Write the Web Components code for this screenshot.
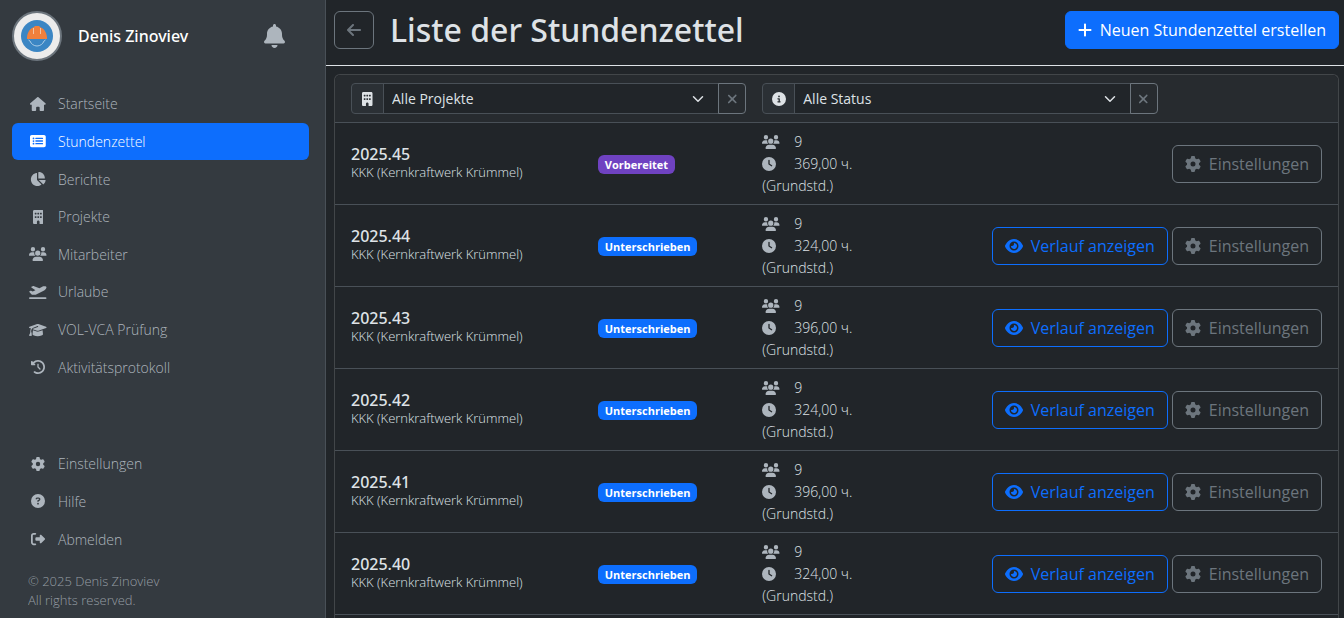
<!DOCTYPE html>
<html lang="de">
<head>
<meta charset="utf-8">
<title>Liste der Stundenzettel</title>
<style>
    body {
        margin: 0;
        min-height: 100vh;
        background: #212529;
        color: #dee2e6;
        font-family: "Open Sans", "Noto Sans", sans-serif;
        font-size: 14px;
        --heading-font: "Noto Sans", "Open Sans", sans-serif;
    }
</style>
</head>
<body>
<app-shell>
    <side-bar slot="sidebar" user="Denis Zinoviev">
        <nav-item icon="house">Startseite</nav-item>
        <nav-item icon="list" active>Stundenzettel</nav-item>
        <nav-item icon="pie">Berichte</nav-item>
        <nav-item icon="building">Projekte</nav-item>
        <nav-item icon="users">Mitarbeiter</nav-item>
        <nav-item icon="plane">Urlaube</nav-item>
        <nav-item icon="cap">VOL-VCA Prüfung</nav-item>
        <nav-item icon="history">Aktivitätsprotokoll</nav-item>
        <nav-item slot="service" icon="gear">Einstellungen</nav-item>
        <nav-item slot="service" icon="question">Hilfe</nav-item>
        <nav-item slot="service" icon="logout">Abmelden</nav-item>
        <span slot="footer">© 2025 Denis Zinoviev<br>All rights reserved.</span>
    </side-bar>
    <page-header>
        Liste der Stundenzettel
        <action-button slot="actions" variant="primary" icon="plus">Neuen Stundenzettel erstellen</action-button>
    </page-header>
    <list-card>
        <filter-select slot="filters" icon="building" label="Projekt" value="Alle Projekte"></filter-select>
        <filter-select slot="filters" icon="info" label="Status" value="Alle Status"></filter-select>
        <timesheet-table></timesheet-table>
    </list-card>
</app-shell>

<script>
const ICONS = {
    house: [576, "M575.8 255.5c0 18-15 32.1-32 32.1l-32 0 .7 160.2c0 2.7-.2 5.4-.5 8.1l0 16.2c0 22.1-17.9 40-40 40l-80 0c-22.1 0-40-17.9-40-40l0-88c0-17.7-14.3-32-32-32l-64 0c-17.7 0-32 14.3-32 32l0 88c0 22.1-17.9 40-40 40l-80 0c-22.1 0-40-17.9-40-40l0-184.500-32 0c-18 0-32-14-32-32.100c0-9 3-17 10-24L266.400 8c7-7 15-8 22-8s15 2 21 7L564.800 231.500c8 7 12 15 11 24z"],
    list: [576, "M0 96C0 60.700 28.700 32 64 32l448 0c35.300 0 64 28.700 64 64l0 320c0 35.300-28.700 64-64 64L64 480c-35.300 0-64-28.700-64-64L0 96zM128 192a32 32 0 1 0 0-64 32 32 0 1 0 0 64zM160 256a32 32 0 1 0-64 0 32 32 0 1 0 64 0zM128 384a32 32 0 1 0 0-64 32 32 0 1 0 0 64zM216 136a24 24 0 0 0 0 48l240 0a24 24 0 0 0 0-48zM216 232a24 24 0 0 0 0 48l240 0a24 24 0 0 0 0-48zM216 328a24 24 0 0 0 0 48l240 0a24 24 0 0 0 0-48z"],
    pie: [576, "M304 240l0-223.400c0-9 7-16.600 16-16.600C443.700 0 544 100.300 544 224c0 9-7.600 16-16.600 16L304 240zM32 272C32 150.700 122.100 50.300 239 34.300c9.200-1.300 17 6.100 17 15.400L256 288 412.500 444.500c6.700 6.700 6.200 17.700-1.500 23.100C371.800 495.600 323.800 512 272 512C139.500 512 32 404.600 32 272zm526.400 16c9.300 0 16.600 7.800 15.400 17c-7.700 55.900-34.600 105.600-73.900 142.300c-6 5.600-15.400 5.200-21.200-.7L320 288l238.400 0z"],
    building: [384, "M48 0C21.500 0 0 21.500 0 48L0 464c0 26.500 21.500 48 48 48l96 0 0-80c0-26.500 21.500-48 48-48s48 21.500 48 48l0 80 96 0c26.500 0 48-21.500 48-48l0-416c0-26.500-21.500-48-48-48L48 0zM64 240a16 16 0 0 1 16-16l32 0a16 16 0 0 1 16 16l0 32a16 16 0 0 1-16 16l-32 0a16 16 0 0 1-16-16zM160 240a16 16 0 0 1 16-16l32 0a16 16 0 0 1 16 16l0 32a16 16 0 0 1-16 16l-32 0a16 16 0 0 1-16-16zM256 240a16 16 0 0 1 16-16l32 0a16 16 0 0 1 16 16l0 32a16 16 0 0 1-16 16l-32 0a16 16 0 0 1-16-16zM64 112a16 16 0 0 1 16-16l32 0a16 16 0 0 1 16 16l0 32a16 16 0 0 1-16 16l-32 0a16 16 0 0 1-16-16zM160 112a16 16 0 0 1 16-16l32 0a16 16 0 0 1 16 16l0 32a16 16 0 0 1-16 16l-32 0a16 16 0 0 1-16-16zM256 112a16 16 0 0 1 16-16l32 0a16 16 0 0 1 16 16l0 32a16 16 0 0 1-16 16l-32 0a16 16 0 0 1-16-16z"],
    users: [640, "M144 0a80 80 0 1 1 0 160A80 80 0 1 1 144 0zM512 0a80 80 0 1 1 0 160A80 80 0 1 1 512 0zM0 298.700C0 239.800 47.800 192 106.700 192l42.700 0c15.900 0 31 3.500 44.600 9.700c-1.300 7.200-1.900 14.700-1.900 22.300c0 38.200 16.800 72.500 43.300 96L21.300 320C9.600 320 0 310.400 0 298.700zM405.300 320c26.600-23.500 42.600-57.800 42.600-96c0-7.600-.7-15-1.900-22.300c13.600-6.300 28.700-9.700 44.600-9.700l42.700 0C592.200 192 640 239.800 640 298.700c0 11.800-9.600 21.300-21.300 21.300l-213.300 0zM224 224a96 96 0 1 1 192 0 96 96 0 1 1 -192 0zM128 485.300C128 411.700 187.700 352 261.300 352l117.300 0C452.300 352 512 411.700 512 485.300c0 14.700-11.900 26.700-26.700 26.700l-330.700 0c-14.700 0-26.700-11.900-26.700-26.700z"],
    plane: [640, "M381 114.900L186.100 41.800c-16.700-6.200-35.200-5.300-51.100 2.700L89.100 67.400C78 73 77.200 88.500 87.600 95.200l146.900 94.500L136 240 77.800 214.100c-8.700-3.900-18.800-3.700-27.300 .6L18.300 230.800c-9.300 4.700-11.800 16.800-5 24.700l73.100 85.300c6.100 7.100 15 11.200 24.300 11.200l137.700 0c5 0 9.900-1.200 14.300-3.400L535.600 212.200c46.500-23.300 82.500-63.300 100.800-112C645.900 75 627.200 48 600.200 48l-57.400 0c-20.200 0-40.200 4.800-58.200 14L381 114.900zM0 480c0 17.700 14.300 32 32 32l576 0c17.700 0 32-14.300 32-32s-14.300-32-32-32L32 448c-17.700 0-32 14.300-32 32z"],
    cap: [640, "M320 32c-8.100 0-16.100 1.400-23.700 4.100L15.800 137.400C6.300 140.900 0 149.900 0 160s6.300 19.100 15.800 22.600l57.900 20.900C57.300 229.300 48 259.800 48 291.900l0 28.100c0 28.400-10.800 57.700-22.300 80.800c-6.500 13-13.900 25.800-22.500 37.600C0 442.700-.9 448.300 .9 453.400s6 8.900 11.200 10.200l64 16c4.200 1.100 8.700 .3 12.400-2s6.300-6.100 7.100-10.400c8.600-42.800 4.300-81.200-2.100-108.700C90.300 344.300 86 329.800 80 316.500l0-24.600c0-30.200 10.200-58.700 27.900-81.500c12.900-15.500 29.600-28 49.200-35.700l157-61.700c8.200-3.200 17.500 .8 20.700 9s-.8 17.500-9 20.700l-157 61.700c-12.400 4.900-23.300 12.400-32.200 21.600l159.600 57.600c7.600 2.700 15.600 4.100 23.700 4.100s16.100-1.400 23.700-4.100L624.200 182.600c9.500-3.400 15.800-12.500 15.800-22.600s-6.300-19.100-15.800-22.600L343.700 36.100C336.100 33.400 328.100 32 320 32zM128 408c0 35.300 86 72 192 72s192-36.700 192-72L496.700 262.600 354.500 314c-11.100 4-22.800 6-34.500 6s-23.500-2-34.500-6L143.300 262.600 128 408z"],
    history: [512, "M75 75L41 41C25.900 25.900 0 36.600 0 57.900L0 168c0 13.300 10.700 24 24 24l110.100 0c21.400 0 32.100-25.900 17-41l-30.800-30.800C155 85.500 203 64 256 64c106 0 192 86 192 192s-86 192-192 192c-40.800 0-78.600-12.700-109.700-34.400c-14.500-10.100-34.400-6.600-44.600 7.900s-6.600 34.400 7.900 44.600C151.200 495 201.700 512 256 512c141.400 0 256-114.600 256-256S397.400 0 256 0C185.300 0 121.300 28.700 75 75zm181 53c-13.300 0-24 10.700-24 24l0 104c0 6.400 2.500 12.500 7 17l72 72c9.400 9.400 24.600 9.400 33.900 0s9.400-24.600 0-33.900l-65-65 0-94.100c0-13.300-10.700-24-24-24z"],
    gear: [512, "M495.900 166.600c3.200 8.700 .5 18.400-6.400 24.600l-43.300 39.400c1.100 8.300 1.700 16.800 1.700 25.400s-.6 17.100-1.700 25.400l43.300 39.400c6.900 6.200 9.600 15.900 6.400 24.600c-4.400 11.900-9.700 23.300-15.800 34.300l-4.700 8.100c-6.600 11-14 21.400-22.100 31.200c-5.900 7.200-15.700 9.600-24.500 6.800l-55.700-17.700c-13.400 10.300-28.200 18.900-44 25.400l-12.500 57.100c-2 9.100-9 16.300-18.200 17.800c-13.800 2.300-28 3.500-42.500 3.500s-28.700-1.200-42.500-3.500c-9.200-1.500-16.200-8.700-18.200-17.800l-12.500-57.100c-15.800-6.500-30.600-15.100-44-25.400L83.100 425.900c-8.800 2.800-18.600 .3-24.500-6.800c-8.100-9.800-15.500-20.200-22.100-31.200l-4.700-8.100c-6.100-11-11.400-22.400-15.800-34.300c-3.200-8.700-.5-18.400 6.400-24.600l43.300-39.400C64.600 273.100 64 264.600 64 256s.6-17.100 1.700-25.400L22.400 191.200c-6.900-6.200-9.600-15.900-6.400-24.600c4.400-11.900 9.700-23.300 15.800-34.300l4.700-8.100c6.600-11 14-21.400 22.100-31.200c5.900-7.200 15.700-9.600 24.500-6.800l55.700 17.700c13.400-10.300 28.200-18.900 44-25.400l12.500-57.100c2-9.100 9-16.300 18.200-17.800C227.300 1.200 241.500 0 256 0s28.700 1.200 42.500 3.500c9.200 1.500 16.200 8.700 18.200 17.800l12.500 57.100c15.800 6.500 30.600 15.100 44 25.400l55.700-17.700c8.800-2.800 18.600-.3 24.500 6.800c8.100 9.800 15.500 20.200 22.100 31.200l4.700 8.100c6.100 11 11.400 22.400 15.800 34.300zM256 336a80 80 0 1 0 0-160 80 80 0 1 0 0 160z"],
    question: [512, "M256 512A256 256 0 1 0 256 0a256 256 0 1 0 0 512zM169.800 165.300c7.900-22.300 29.100-37.300 52.800-37.300l58.300 0c34.900 0 63.100 28.300 63.100 63.100c0 22.600-12.100 43.500-31.700 54.800L280 264.400c-.2 13-10.900 23.600-24 23.600c-13.300 0-24-10.700-24-24l0-13.500c0-8.600 4.600-16.500 12.100-20.800l44.300-25.400c4.700-2.700 7.600-7.700 7.600-13.100c0-8.400-6.800-15.100-15.100-15.100l-58.300 0c-3.400 0-6.400 2.100-7.500 5.300l-.4 1.200c-4.400 12.500-18.200 19-30.600 14.600s-19-18.200-14.600-30.600l.4-1.200zM224 352a32 32 0 1 1 64 0 32 32 0 1 1 -64 0z"],
    info: [512, "M256 512A256 256 0 1 0 256 0a256 256 0 1 0 0 512zM216 336l24 0 0-64-24 0c-13.300 0-24-10.700-24-24s10.700-24 24-24l48 0c13.300 0 24 10.700 24 24l0 88 8 0c13.300 0 24 10.700 24 24s-10.700 24-24 24l-80 0c-13.300 0-24-10.700-24-24s10.700-24 24-24zm40-208a32 32 0 1 1 0 64 32 32 0 1 1 0-64z"],
    clock: [512, "M256 0a256 256 0 1 1 0 512A256 256 0 1 1 256 0zM232 120l0 136c0 8 4 15.500 10.700 20l96 64c11 7.400 25.900 4.400 33.300-6.700s4.400-25.900-6.700-33.300L280 243.200 280 120c0-13.300-10.700-24-24-24s-24 10.700-24 24z"],
    logout: [512, "M377.900 105.900L500.700 228.700c7.200 7.200 11.300 17.100 11.300 27.300s-4.100 20.100-11.300 27.300L377.900 406.100c-6.400 6.400-15 9.900-24 9.900c-18.700 0-33.900-15.200-33.900-33.900l0-62.100-128 0c-17.700 0-32-14.300-32-32l0-64c0-17.700 14.300-32 32-32l128 0 0-62.100c0-18.700 15.200-33.900 33.900-33.900c9 0 17.600 3.600 24 9.900zM160 96L96 96c-17.700 0-32 14.300-32 32l0 256c0 17.700 14.300 32 32 32l64 0c17.700 0 32 14.300 32 32s-14.300 32-32 32l-64 0c-53 0-96-43-96-96L0 128C0 75 43 32 96 32l64 0c17.700 0 32 14.300 32 32s-14.300 32-32 32z"],
    eye: [576, "M288 32c-80.800 0-145.500 36.800-192.600 80.600C48.600 156 17.300 208 2.500 243.700c-3.300 7.900-3.300 16.700 0 24.600C17.300 304 48.600 356 95.400 399.400C142.500 443.200 207.200 480 288 480s145.500-36.800 192.600-80.600c46.800-43.500 78.100-95.400 93-131.100c3.300-7.900 3.300-16.700 0-24.600c-14.900-35.700-46.200-87.700-93-131.100C433.500 68.800 368.800 32 288 32zM144 256a144 144 0 1 1 288 0 144 144 0 1 1 -288 0zm144-64c0 35.300-28.700 64-64 64c-7.100 0-13.900-1.200-20.300-3.300c-5.500-1.800-11.900 1.600-11.700 7.400c.3 6.900 1.300 13.800 3.200 20.700c13.700 51.200 66.400 81.600 117.600 67.900s81.600-66.400 67.900-117.600c-11.100-41.500-47.800-69.400-88.600-71.100c-5.800-.2-9.200 6.100-7.400 11.700c2.100 6.400 3.300 13.200 3.300 20.300z"],
    bell: [448, "M224 0c-17.700 0-32 14.300-32 32l0 19.200C119 66 64 130.600 64 208l0 18.800c0 47-17.300 92.400-48.500 127.600l-7.400 8.300c-8.400 9.400-10.400 22.900-5.300 34.400S19.400 416 32 416l384 0c12.600 0 24-7.400 29.200-18.900s3.100-25-5.300-34.400l-7.400-8.300C401.300 319.200 384 273.900 384 226.800l0-18.800c0-77.400-55-142-128-156.800L256 32c0-17.700-14.300-32-32-32zm45.300 493.300c12-12 18.700-28.300 18.700-45.300l-64 0-64 0c0 17 6.700 33.300 18.700 45.300s28.300 18.700 45.300 18.700s33.300-6.700 45.300-18.700z"],
    arrow: [448, "M9.400 233.400c-12.500 12.500-12.500 32.800 0 45.300l160 160c12.500 12.500 32.800 12.500 45.300 0s12.500-32.800 0-45.300L109.200 288 416 288c17.700 0 32-14.300 32-32s-14.300-32-32-32l-306.700 0L214.600 118.600c12.500-12.500 12.500-32.800 0-45.300s-32.800-12.500-45.300 0l-160 160z"],
    plus: [448, "M256 80c0-17.700-14.300-32-32-32s-32 14.300-32 32l0 144L48 224c-17.700 0-32 14.300-32 32s14.300 32 32 32l144 0 0 144c0 17.700 14.300 32 32 32s32-14.300 32-32l0-144 144 0c17.700 0 32-14.300 32-32s-14.300-32-32-32l-144 0 0-144z"],
    cross: [384, "M342.600 150.600c12.500-12.500 12.500-32.800 0-45.300s-32.800-12.500-45.300 0L192 210.700 86.600 105.400c-12.500-12.500-32.800-12.500-45.300 0s-12.500 32.800 0 45.300L146.700 256 41.400 361.400c-12.500 12.500-12.500 32.800 0 45.300s32.800 12.500 45.300 0L192 301.300 297.400 406.600c12.500 12.500 32.800 12.500 45.300 0s12.500-32.800 0-45.300L237.300 256 342.600 150.600z"]
};

class BaseElement extends HTMLElement {
    constructor() {
        super();
        this.shadow = this.attachShadow({ mode: 'open' });
    }

    connectedCallback() {
        this.shadow.innerHTML = `<style>*, *::before { box-sizing: border-box; }${this.css()}</style>${this.html()}`;
    }
}

// Icon as tall as its font size, width follows the glyph
class FaIcon extends BaseElement {
    css() {
        return `
        :host { display: inline-flex; justify-content: center; flex: none; }
        svg { display: block; height: 1em; fill: currentColor; fill-rule: evenodd; }`;
    }
    html() {
        const [width, path] = ICONS[this.getAttribute('name')];
        return `<svg viewBox="0 0 ${width} 512" aria-hidden="true"><path d="${path}"/></svg>`;
    }
}
customElements.define('fa-icon', FaIcon);

class AppShell extends BaseElement {
    css() {
        return `
        :host { display: flex; min-height: 100vh; }
        ::slotted([slot="sidebar"]) { flex: 0 0 326px; }
        main { display: flex; flex-direction: column; flex: 1; min-width: 0; }`;
    }
    html() {
        return `<slot name="sidebar"></slot><main><slot></slot></main>`;
    }
}
customElements.define('app-shell', AppShell);

class NavItem extends BaseElement {
    css() {
        return `
        :host { display: block; }
        a {
            display: flex;
            align-items: center;
            gap: 8px;
            height: 100%;
            padding: 0 14px;
            border-radius: 6px;
            color: #adb5bd;
            font-weight: 300;
            text-decoration: none;
        }
        a.active { background: #0d6efd; color: #fff; }
        fa-icon { width: 24px; }`;
    }
    html() {
        return `
        <a href="#" class="${this.hasAttribute('active') ? 'active' : ''}">
            <fa-icon name="${this.getAttribute('icon')}"></fa-icon><span><slot></slot></span>
        </a>`;
    }
}
customElements.define('nav-item', NavItem);

class SideBar extends BaseElement {
    css() {
        return `
        :host {
            display: flex;
            flex-direction: column;
            box-sizing: border-box;
            padding: 11px 16px 0 12px;
            background: #343a40;
            border-right: 1px solid #495057;
        }
        header { display: flex; align-items: center; gap: 16px; margin-bottom: 24px; }
        header svg { flex: none; width: 50px; height: 50px; }
        strong { flex: 1; color: #fff; font-family: var(--heading-font); font-size: 16px; font-weight: 500; }
        button {
            margin: 0 24px 0 0;
            padding: 0;
            border: 0;
            background: none;
            color: #adb5bd;
            font-size: 24px;
        }
        button fa-icon { display: flex; }
        nav { display: grid; grid-auto-rows: 1fr; height: 301px; }
        nav.service { height: 113px; margin-top: 59px; }
        footer {
            margin: 14px 16px 0;
            color: #adb5bd;
            font-size: 13px;
            font-weight: 300;
            line-height: 19px;
            opacity: .8;
        }`;
    }
    html() {
        return `
        <header>
            <svg viewBox="0 0 50 50" aria-hidden="true">
                <circle cx="25" cy="25" r="24" fill="#ececec" stroke="#6c757d" stroke-width="2"/>
                <circle cx="25" cy="25" r="16" fill="#3b86c4"/>
                <path d="M16.500 29l1.500 1c1 3 4 5 7 5s6-2 7-5l1.500-1" fill="none" stroke="#a9cbe6"/>
                <path d="M15 28v-1.500c.5-5.500 3-9 7-10.500l1-1h4l1 1c4 1.500 6.500 5 7 10.500V28z" fill="#f0803c"/>
                <path d="M21.500 17v6M28.500 17v6" stroke="#f3c3a0" fill="none"/>
            </svg>
            <strong>${this.getAttribute('user')}</strong>
            <button type="button" aria-label="Benachrichtigungen"><fa-icon name="bell"></fa-icon></button>
        </header>
        <nav><slot></slot></nav>
        <nav class="service"><slot name="service"></slot></nav>
        <footer><slot name="footer"></slot></footer>`;
    }
}
customElements.define('side-bar', SideBar);

class ActionButton extends BaseElement {
    css() {
        return `
        :host { display: block; }
        button {
            display: flex;
            align-items: center;
            gap: 8px;
            height: 38px;
            padding: 0 12px;
            border: 1px solid #6c757d;
            border-radius: 6px;
            background: transparent;
            color: #6c757d;
            font: inherit;
            font-size: 16px;
            white-space: nowrap;
        }
        button.primary { background: #0d6efd; border-color: #0d6efd; color: #fff; }
        button.outline { border-color: #0d6efd; color: #0d6efd; }`;
    }
    html() {
        const label = this.getAttribute('label');
        return `
        <button type="button" class="${this.getAttribute('variant') || ''}" ${label ? `aria-label="${label}"` : ''}>
            <fa-icon name="${this.getAttribute('icon')}"></fa-icon>${label ? '' : '<span><slot></slot></span>'}
        </button>`;
    }
}
customElements.define('action-button', ActionButton);

class PageHeader extends BaseElement {
    css() {
        return `
        :host {
            display: flex;
            align-items: center;
            gap: 16px;
            padding: 11px 5px 16px 8px;
            border-bottom: 1px solid #dee2e6;
        }
        h1 {
            flex: 1;
            margin: 0;
            font-family: var(--heading-font);
            font-size: 32px;
            font-weight: 500;
            line-height: 38px;
        }`;
    }
    html() {
        return `
        <action-button icon="arrow" label="Zurück"></action-button>
        <h1><slot></slot></h1>
        <slot name="actions"></slot>`;
    }
}
customElements.define('page-header', PageHeader);

class FilterSelect extends BaseElement {
    css() {
        return `
        :host { display: flex; height: 31px; }
        label, button {
            display: flex;
            align-items: center;
            justify-content: center;
            border: 1px solid #495057;
        }
        label { width: 33px; background: #2b3035; border-radius: 4px 0 0 4px; }
        select {
            flex: 1;
            min-width: 0;
            margin: 0 -1px;
            padding: 0 8px;
            appearance: none;
            border: 1px solid #495057;
            border-radius: 0;
            color: #dee2e6;
            font: inherit;
            background: #212529 url('data:image/svg+xml,<svg xmlns="http://www.w3.org/2000/svg" viewBox="0 0 16 16"><path fill="none" stroke="%23dee2e6" stroke-linecap="round" stroke-linejoin="round" stroke-width="2" d="m2 5 6 6 6-6"/></svg>') no-repeat right 14px center / 12px;
        }
        button {
            width: 28px;
            padding: 0;
            border-color: #6c757d;
            border-radius: 0 4px 4px 0;
            background: none;
            color: #6c757d;
            font-size: 14px;
        }`;
    }
    html() {
        return `
        <label for="filter" aria-label="${this.getAttribute('label')}"><fa-icon name="${this.getAttribute('icon')}"></fa-icon></label>
        <select id="filter"><option>${this.getAttribute('value')}</option></select>
        <button type="button" aria-label="Filter löschen"><fa-icon name="cross"></fa-icon></button>`;
    }
}
customElements.define('filter-select', FilterSelect);

class ListCard extends BaseElement {
    css() {
        return `
        :host {
            display: block;
            flex: 1;
            margin: 8px 5px 0 8px;
            border: 1px solid #424649;
            border-bottom: 0;
            border-radius: 6px 6px 0 0;
        }
        header {
            display: grid;
            grid-template-columns: 5fr 5fr 2fr;
            padding: 8px;
            background: #272b2f;
            border-bottom: 1px solid #495057;
            border-radius: 6px 6px 0 0;
        }
        ::slotted([slot="filters"]) { margin: 0 8px; }`;
    }
    html() {
        return `<header><slot name="filters"></slot></header><slot></slot>`;
    }
}
customElements.define('list-card', ListCard);

class StatusBadge extends BaseElement {
    css() {
        return `
        :host {
            display: inline-block;
            padding: 0 7px;
            border-radius: 6px;
            background: #0d6efd;
            color: #fff;
            font-size: 11px;
            font-weight: 700;
            line-height: 19px;
        }
        :host([kind="prepared"]) { background: #6f42c1; }`;
    }
    html() {
        return `<slot></slot>`;
    }
}
customElements.define('status-badge', StatusBadge);

class TimesheetTable extends BaseElement {
    rows = [
        ['2025.45', '369,00', false],
        ['2025.44', '324,00', true],
        ['2025.43', '396,00', true],
        ['2025.42', '324,00', true],
        ['2025.41', '396,00', true],
        ['2025.40', '324,00', true]
    ];

    css() {
        return `
        :host { display: block; }
        table, tbody { display: block; }
        tr {
            display: grid;
            grid-template-columns: 3fr 2fr 2fr 5fr;
            align-items: center;
            padding: 8px 8px 7px;
            border-bottom: 1px solid #495057;
        }
        td { display: block; padding: 0 8px; }
        .name { padding-bottom: 4px; }
        h2 { margin: 0; font-family: var(--heading-font); font-size: 16px; font-weight: 500; line-height: 20px; }
        small { display: block; font-size: 13px; font-weight: 300; line-height: 16px; }
        .stats { font-weight: 300; line-height: 22px; }
        .stats div { display: grid; grid-template-columns: 32px 1fr; align-items: center; }
        .stats fa-icon { justify-content: start; color: #adb5bd; }
        .actions { display: flex; justify-content: flex-end; gap: 4px; }`;
    }

    row([name, hours, signed]) {
        return `
        <tr>
            <td class="name"><h2>${name}</h2><small>KKK (Kernkraftwerk Krümmel)</small></td>
            <td>${signed ? '<status-badge>Unterschrieben</status-badge>' : '<status-badge kind="prepared">Vorbereitet</status-badge>'}</td>
            <td class="stats">
                <div><fa-icon name="users"></fa-icon><span>9</span></div>
                <div><fa-icon name="clock"></fa-icon><span>${hours} ч.</span></div>
                (Grundstd.)
            </td>
            <td class="actions">
                ${signed ? '<action-button variant="outline" icon="eye">Verlauf anzeigen</action-button>' : ''}
                <action-button icon="gear">Einstellungen</action-button>
            </td>
        </tr>`;
    }

    html() {
        return `<table><tbody>${this.rows.map((row) => this.row(row)).join('')}</tbody></table>`;
    }
}
customElements.define('timesheet-table', TimesheetTable);
</script>
</body>
</html>
